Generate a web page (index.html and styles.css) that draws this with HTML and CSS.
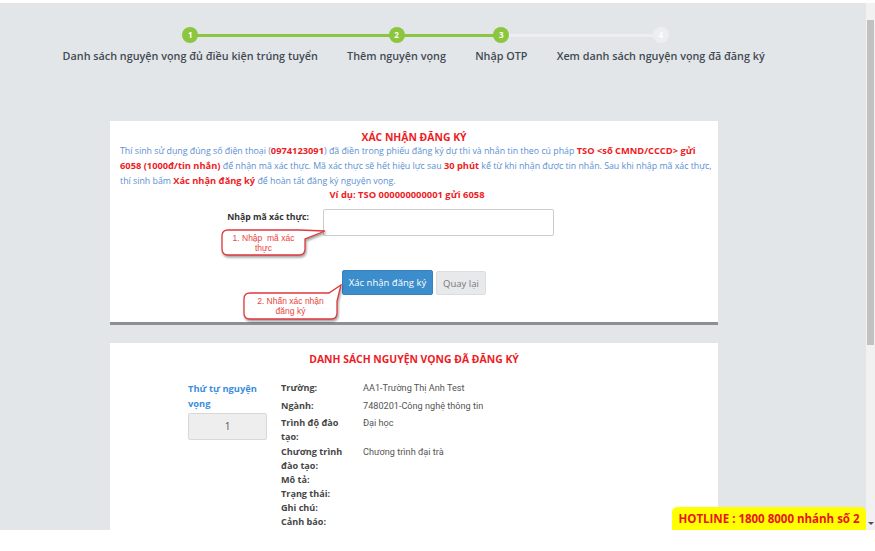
FILE: index.html
```html
<!DOCTYPE html>
<html lang="vi">
<head>
    <meta charset="UTF-8">
    <title>Xác nhận đăng ký</title>
    <link rel="stylesheet" href="styles.css">
</head>
<body>
<div class="screen">
    <div class="viewport">
        <div class="page">
            <ol class="steps">
                <li class="step step-done"><span class="dot">1</span><span class="label">Danh sách nguyện vọng đủ điều kiện trúng tuyển</span></li>
                <li class="step step-done"><span class="dot">2</span><span class="label">Thêm nguyện vọng</span></li>
                <li class="step step-current"><span class="dot">3</span><span class="label">Nhập OTP</span></li>
                <li class="step step-todo"><span class="dot">4</span><span class="label">Xem danh sách nguyện vọng đã đăng ký</span></li>
            </ol>

            <section class="card confirm">
                <h2 class="card-title">XÁC NHẬN ĐĂNG KÝ</h2>
                <p class="note">
                    Thí sinh sử dụng đúng số điện thoại (<b>0974123091</b>) đã điền trong phiếu đăng ký dự thi và nhắn tin theo cú pháp <b>TSO &lt;số CMND/CCCD&gt; gửi</b><br>
                    <b>6058 (1000đ/tin nhắn)</b> để nhận mã xác thực. Mã xác thực sẽ hết hiệu lực sau <b>30 phút</b> kể từ khi nhận được tin nhắn. Sau khi nhập mã xác thực,<br>
                    thí sinh bấm <b>Xác nhận đăng ký</b> để hoàn tất đăng ký nguyện vọng.
                </p>
                <p class="example">Ví dụ: TSO 000000000001 gửi 6058</p>
                <div class="otp-row">
                    <label class="otp-label" for="otp">Nhập mã xác thực:</label>
                    <input class="otp-input" id="otp" type="text">
                </div>
                <div class="actions">
                    <button class="btn btn-primary" type="button">Xác nhận đăng ký</button>
                    <button class="btn btn-default" type="button">Quay lại</button>
                </div>

                <div class="callout callout-otp">
                    <svg width="115" height="35" viewBox="0 0 115 35"><path d="M13 5H84L110 6L90 14V24Q90 30 84 30H13Q7 30 7 24V11Q7 5 13 5Z"/></svg>
                    <span class="callout-text">1. Nhập&nbsp; mã xác<br>thực</span>
                </div>
                <div class="callout callout-submit">
                    <svg width="110" height="45" viewBox="0 0 110 45"><path d="M13 13H92L104 5L100 21V33Q100 39 94 39H13Q7 39 7 33V19Q7 13 13 13Z"/></svg>
                    <span class="callout-text">2. Nhấn xác nhận<br>đăng ký</span>
                </div>
            </section>

            <section class="card list">
                <h2 class="card-title">DANH SÁCH NGUYỆN VỌNG ĐÃ ĐĂNG KÝ</h2>
                <div class="wish">
                    <div class="wish-order">
                        <div class="order-title">Thứ tự nguyện vọng</div>
                        <div class="order-box">1</div>
                    </div>
                    <dl class="wish-info">
                        <dt>Trường:</dt><dd>AA1-Trường Thị Anh Test</dd>
                        <dt>Ngành:</dt><dd>7480201-Công nghệ thông tin</dd>
                        <dt>Trình độ đào tạo:</dt><dd>Đại học</dd>
                        <dt>Chương trình đào tạo:</dt><dd>Chương trình đại trà</dd>
                        <dt>Mô tả:</dt><dd></dd>
                        <dt>Trạng thái:</dt><dd></dd>
                        <dt>Ghi chú:</dt><dd></dd>
                        <dt>Cảnh báo:</dt><dd></dd>
                    </dl>
                </div>
            </section>

            <div class="hotline">HOTLINE : 1800 8000 nhánh số 2</div>
        </div>
        <div class="scrollbar">
            <div class="thumb"></div>
            <span class="arrow-down"></span>
        </div>
    </div>
</div>
</body>
</html>
```

FILE: styles.css
```css
*{margin:0;padding:0;box-sizing:border-box;}
body{background:#fff;font-family:"Open Sans",Arial,sans-serif;color:#333;}

.screen{padding-top:3px;}
.viewport{display:flex;height:527px;}
.page{position:relative;width:866px;overflow:hidden;background:#e3e6e9;}

/* steps */
.steps{display:flex;list-style:none;padding-top:24px;margin-left:48px;}
.step{position:relative;display:flex;flex-direction:column;align-items:center;padding:0 14.6px;}
.step::before,.step::after{content:"";position:absolute;top:7px;height:3px;background:#8cc63f;}
.step::before{left:0;right:50%;}
.step::after{left:50%;right:0;}
.step:first-child::before,.step:last-child::after{display:none;}
.step-current::after,.step-todo::before{background:#eceef0;}
.dot{position:relative;z-index:1;width:16px;height:16px;border-radius:50%;background:#8cc63f;color:#fff;font-size:8px;font-weight:700;line-height:16px;text-align:center;}
.step-todo .dot{background:#eceef0;}
.label{margin-top:5px;font-size:10.8px;font-weight:600;line-height:16px;color:#414a53;white-space:nowrap;}

/* cards */
.card{position:relative;width:608px;margin-left:110px;background:#fff;}
.card-title{font-size:10.4px;font-weight:700;line-height:13px;color:#ee1c25;text-align:center;}
.confirm{margin-top:57px;padding:10px 10px 27px;border-bottom:3px solid #8d9093;}
.note{font-size:8.8px;line-height:15px;color:#5b8fd3;white-space:nowrap;}
.note b{font-size:9.3px;line-height:9px;color:#ee1c25;}
.example{font-size:9.4px;font-weight:700;line-height:12px;color:#ee1c25;text-align:center;padding-right:14px;}

.otp-row{display:flex;margin-top:8px;}
.otp-label{width:189px;margin-right:14px;font-size:8.7px;font-weight:700;line-height:16px;text-align:right;color:#333;}
.otp-input{width:231px;height:27px;border:1px solid #ccc;border-radius:2px;}

.actions{display:flex;gap:3px;margin-top:34px;padding-left:222px;}
.btn{height:25px;border-radius:2px;font-family:inherit;font-size:9.5px;}
.btn-primary{width:91px;background:#3c8dcc;border:1px solid #3682c0;color:#fff;}
.btn-default{width:50px;height:24px;margin-top:1px;background:#e8e9eb;border:1px solid #dcdde0;color:#777;}

/* annotation bubbles */
.callout{position:absolute;}
.callout svg{display:block;filter:drop-shadow(1.5px 2px 1px rgba(0,0,0,.35));}
.callout path{fill:#fff;stroke:#e0393e;stroke-width:1.3;}
.callout-text{position:absolute;font-family:"Liberation Sans",Arial,sans-serif;font-size:8.5px;line-height:10px;color:#e8453c;text-align:center;}
.callout-otp{left:105px;top:104px;}
.callout-otp .callout-text{left:7px;top:8px;width:83px;}
.callout-submit{left:127px;top:159px;}
.callout-submit .callout-text{left:7px;top:16px;width:93px;}

.list{margin-top:18px;padding:10px 0 20px;min-height:200px;}
.wish{display:flex;gap:14px;margin-top:15px;padding-left:78px;}
.wish-order{width:79px;}
.order-title{font-size:9.3px;font-weight:700;line-height:15px;color:#3a8ee0;}
.order-box{height:27px;margin-top:2px;border:1px solid #d8d8d8;border-radius:2px;background:#eeeeee;font-size:10px;line-height:25px;text-align:center;color:#555;}
.wish-info{display:grid;grid-template-columns:72px 1fr;column-gap:10px;line-height:14px;}
.wish-info dt{font-size:9.1px;font-weight:700;color:#464646;}
.wish-info dd{font-family:Roboto,"Open Sans",sans-serif;font-size:9.15px;color:#555;}
.wish-info dt:nth-of-type(1),.wish-info dd:nth-of-type(1){padding-bottom:4px;}
.wish-info dt:nth-of-type(2),.wish-info dd:nth-of-type(2){padding-bottom:3px;}
.wish-info dt:nth-of-type(3),.wish-info dd:nth-of-type(3){padding-bottom:1px;}

.hotline{position:absolute;right:0;bottom:0;width:194px;height:23px;border-radius:5px 5px 0 0;background:#ffff00;color:#e8141c;font-size:11.5px;font-weight:700;line-height:23px;text-align:center;}

/* fake scrollbar */
.scrollbar{position:relative;width:9px;background:#f1f1f1;}
.thumb{height:325px;margin:17px 1px 0;background:#c1c1c1;}
.arrow-down{position:absolute;left:2px;bottom:5px;border-left:3px solid transparent;border-right:3px solid transparent;border-top:3px solid #505050;}
```
